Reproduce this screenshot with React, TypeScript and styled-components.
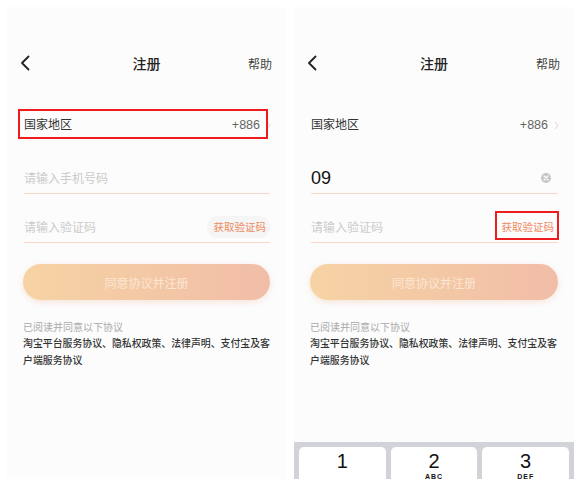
import React from 'react';
import styled, {createGlobalStyle} from 'styled-components';

const GlobalStyle = createGlobalStyle`
  html, body {
    margin: 0;
    padding: 0;
    background: #ffffff;
  }
  body {
    font-family: "Noto Sans CJK SC", "Noto Sans", sans-serif;
    color: #333;
  }
`;

const Page = styled.div`
  display: flex;
  gap: 8px;
  padding: 7px;
  width: 581px;
  height: 487px;
  box-sizing: border-box;
`;

const Phone = styled.div<{ $w: number }>`
  width: ${p => p.$w}px;
  height: 472px;
  flex-shrink: 0;
  background: #fcfcfc;
  display: flex;
  flex-direction: column;
  overflow: hidden;
`;

const NavBar = styled.div`
  margin-top: 44px;
  height: 24px;
  display: flex;
  align-items: center;
  justify-content: space-between;
  padding: 0 14px 0 13px;
  position: relative;
`;

const Title = styled.div`
  position: absolute;
  left: 0;
  right: 0;
  text-align: center;
  font-size: 14px;
  font-weight: 500;
  color: #222;
  pointer-events: none;
`;

const Help = styled.div`
  font-size: 12px;
  color: #444;
`;

const CountryRow = styled.div<{ $marked?: boolean }>`
  margin-top: 34px;
  height: 30px;
  display: flex;
  align-items: center;
  padding: 0 15px 0 17px;
  font-size: 12px;
  line-height: 18px;
  color: #333;
  position: relative;
  &::after {
    content: '';
    display: ${p => (p.$marked ? 'block' : 'none')};
    position: absolute;
    top: 0;
    bottom: 0;
    left: 11px;
    right: 18px;
    border: 2px solid #ee1c1c;
  }
`;

const Code = styled.span`
  margin-left: auto;
  margin-top: 2px;
  color: #666;
  font-family: "Liberation Sans", sans-serif;
  font-size: 12.5px;
`;

const Form = styled.div`
  padding-top: 6px;
  display: flex;
  flex-direction: column;
`;

const Field = styled.div`
  margin: 0 16px 0 17px;
  height: 42px;
  padding-bottom: 6px;
  border-bottom: 1px solid #fad6c8;
  display: flex;
  align-items: flex-end;
`;

const Placeholder = styled.span`
  font-size: 12px;
  line-height: 18px;
  color: #cbcbcb;
`;

const Value = styled.span`
  font-family: "Liberation Sans", sans-serif;
  font-size: 18px;
  line-height: 18px;
  color: #111;
`;

const ClearIcon = styled.span`
  margin-left: auto;
  margin-right: 7px;
  margin-bottom: 4px;
  width: 10px;
  height: 10px;
  border-radius: 50%;
  background: #c6c6c8;
  display: flex;
  align-items: center;
  justify-content: center;
`;

const GetCode = styled.span<{ $marked?: boolean }>`
  margin-left: auto;
  margin-bottom: -2px;
  height: 22px;
  padding: 0 4px 0 7px;
  border-radius: 11px;
  background: ${p => (p.$marked ? 'transparent' : '#f5f5f5')};
  font-size: 10.5px;
  line-height: 22px;
  color: #ef8a5e;
  position: relative;
  &::after {
    content: '';
    display: ${p => (p.$marked ? 'block' : 'none')};
    position: absolute;
    top: -5px;
    bottom: -2px;
    left: 0;
    right: -1px;
    border: 2px solid #ee1c1c;
  }
`;

const SubmitButton = styled.div`
  margin: 21px 16px 0 16px;
  height: 36px;
  border-radius: 18px;
  background: linear-gradient(90deg, #f6d3a4 0%, #f3c6a5 60%, #f1bda8 100%);
  box-shadow: 0 2px 6px rgba(240, 185, 150, 0.35);
  display: flex;
  align-items: center;
  justify-content: center;
  font-size: 12px;
  color: #fbe6d4;
`;

const Agreement = styled.div`
  margin: 19px 4px 0 16px;
  white-space: nowrap;
`;

const AgreementHint = styled.div`
  font-size: 10px;
  line-height: 16px;
  color: #aaa;
`;

const AgreementLinks = styled.div`
  font-size: 9.9px;
  line-height: 17px;
  color: #333;
  font-weight: 500;
`;

const Keyboard = styled.div`
  margin-top: auto;
  height: 37px;
  overflow: hidden;
  background: #d1d3d8;
  display: grid;
  grid-template-columns: repeat(3, 1fr);
  gap: 5px;
  padding: 5px 5px 0 5px;
  box-sizing: border-box;
`;

const Key = styled.div`
  height: 45px;
  background: #fff;
  border-radius: 5px;
  display: flex;
  flex-direction: column;
  align-items: center;
  padding-top: 4px;
  box-sizing: border-box;
  color: #111;
`;

const Digit = styled.span`
  font-family: "Liberation Sans", sans-serif;
  font-size: 20px;
  line-height: 21px;
`;

const Letters = styled.span`
  font-family: "Liberation Sans", sans-serif;
  font-size: 7px;
  font-weight: 700;
  letter-spacing: 1px;
  line-height: 9px;
`;

const BackIcon = () => (
  <svg width="10" height="16" viewBox="0 0 10 16" fill="none">
    <path d="M8.5 1.5 L2 8 L8.5 14.5" stroke="#222" strokeWidth="1.8" strokeLinecap="round" strokeLinejoin="round" />
  </svg>
);

const Chevron = () => (
  <svg width="5" height="9" viewBox="0 0 5 9" fill="none" style={{marginLeft: 6, marginTop: 2}}>
    <path d="M1 1 L4 4.5 L1 8" stroke="#d6d6d6" strokeWidth="1" />
  </svg>
);

const Header = () => (
  <NavBar>
    <BackIcon />
    <Title>注册</Title>
    <Help>帮助</Help>
  </NavBar>
);

const AgreementBlock = () => (
  <Agreement>
    <AgreementHint>已阅读并同意以下协议</AgreementHint>
    <AgreementLinks>
      淘宝平台服务协议、隐私权政策、法律声明、支付宝及客
      <br />
      户端服务协议
    </AgreementLinks>
  </Agreement>
);

const keys = [
  {d: '1', l: ''},
  {d: '2', l: 'ABC'},
  {d: '3', l: 'DEF'},
];

const App = () => (
  <>
    <GlobalStyle />
    <Page>
      <Phone $w={279}>
        <Header />
        <CountryRow $marked>
          国家地区
          <Code>+886</Code>
          <Chevron />
        </CountryRow>
        <Form>
          <Field>
            <Placeholder>请输入手机号码</Placeholder>
          </Field>
          <Field>
            <Placeholder>请输入验证码</Placeholder>
            <GetCode>获取验证码</GetCode>
          </Field>
        </Form>
        <SubmitButton>同意协议并注册</SubmitButton>
        <AgreementBlock />
      </Phone>

      <Phone $w={280}>
        <Header />
        <CountryRow>
          国家地区
          <Code>+886</Code>
          <Chevron />
        </CountryRow>
        <Form>
          <Field>
            <Value>09</Value>
            <ClearIcon>
              <svg width="6" height="6" viewBox="0 0 6 6">
                <path d="M1 1 L5 5 M5 1 L1 5" stroke="#fff" strokeWidth="1.3" strokeLinecap="round" />
              </svg>
            </ClearIcon>
          </Field>
          <Field>
            <Placeholder>请输入验证码</Placeholder>
            <GetCode $marked>获取验证码</GetCode>
          </Field>
        </Form>
        <SubmitButton>同意协议并注册</SubmitButton>
        <AgreementBlock />
        <Keyboard>
          {keys.map(k => (
            <Key key={k.d}>
              <Digit>{k.d}</Digit>
              <Letters>{k.l}</Letters>
            </Key>
          ))}
        </Keyboard>
      </Phone>
    </Page>
  </>
);

export default App;
